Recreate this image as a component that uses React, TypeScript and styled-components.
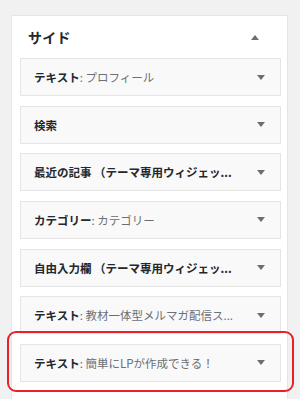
import React from 'react';
import styled, { createGlobalStyle } from 'styled-components';

const GlobalStyles = createGlobalStyle`
  html, body {
    margin: 0;
    padding: 0;
    background: #f1f1f1;
  }
  body {
    font-family: "Noto Sans CJK JP", "Noto Sans", "Liberation Sans", sans-serif;
    color: #23282d;
  }
`;

const Panel = styled.div`
  margin: 15px 0 0 11px;
  width: 277px;
  min-height: 384px;
  box-sizing: border-box;
  background: #fff;
  border: 1px solid #e5e5e5;
  border-bottom: none;
  padding: 0 6px 0 8px;
`;

const Header = styled.div`
  display: flex;
  align-items: center;
  justify-content: space-between;
  height: 42px;
  padding: 0 22px 0 8px;
`;

const Title = styled.h2`
  margin: 0;
  font-size: 14px;
  font-weight: 700;
  letter-spacing: 0.3px;
`;

const Arrow = styled.span<{ $up?: boolean }>`
  width: 0;
  height: 0;
  border-left: 4px solid transparent;
  border-right: 4px solid transparent;
  ${(p) =>
    p.$up ? 'border-bottom: 5px solid #6a6f74;' : 'border-top: 5px solid #6a6f74;'}
`;

const List = styled.div`
  display: flex;
  flex-direction: column;
  gap: 9.67px;
`;

const Slot = styled.div`
  position: relative;
`;

const Widget = styled.div`
  display: flex;
  align-items: center;
  justify-content: space-between;
  height: 38px;
  box-sizing: border-box;
  background: #f9f9f9;
  border: 1px solid #e5e5e5;
  padding: 0 15px 0 13px;
`;

const WidgetTitle = styled.h3`
  margin: 0;
  font-size: 11.5px;
  font-weight: 700;
  white-space: pre;
  color: #23282d;
`;

const Sub = styled.span`
  font-weight: 400;
  color: #6b6f73;
`;

const Highlight = styled.div`
  position: absolute;
  left: -13px;
  right: -13px;
  top: -13px;
  bottom: -10px;
  border: 2px solid #e8202a;
  border-radius: 9px;
  pointer-events: none;
`;

const widgets: { name: string; sub?: string; marked?: boolean }[] = [
  { name: 'テキスト', sub: 'プロフィール' },
  { name: '検索' },
  { name: '最近の記事 （テーマ専用ウィジェッ...' },
  { name: 'カテゴリー', sub: 'カテゴリー' },
  { name: '自由入力欄 （テーマ専用ウィジェッ...' },
  { name: 'テキスト', sub: '教材一体型メルマガ配信ス...' },
  { name: 'テキスト', sub: '簡単にLPが作成できる！', marked: true },
];

export default function App() {
  return (
    <>
      <GlobalStyles />
      <Panel>
        <Header>
          <Title>サイド</Title>
          <Arrow $up />
        </Header>
        <List>
          {widgets.map((w, i) => (
            <Slot key={i}>
              <Widget>
                <WidgetTitle>
                  {w.name}
                  {w.sub ? <Sub>: {w.sub}</Sub> : null}
                </WidgetTitle>
                <Arrow />
              </Widget>
              {w.marked ? <Highlight /> : null}
            </Slot>
          ))}
        </List>
      </Panel>
    </>
  );
}
